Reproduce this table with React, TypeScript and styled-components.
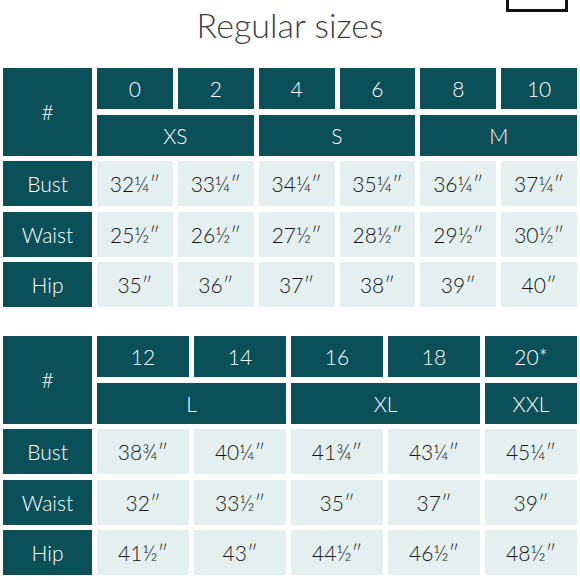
import React from "react";
import styled, { createGlobalStyle } from "styled-components";

const GlobalStyle = createGlobalStyle`
  html, body {
    margin: 0;
    padding: 0;
    background: #ffffff;
  }
  body {
    width: 580px;
    font-family: "Lato", "Noto Sans", "DejaVu Sans", sans-serif;
  }
`;

const TEAL = "#0b4f59";
const LIGHT = "#e4efef";

const Page = styled.div`
  display: flex;
  flex-direction: column;
  padding: 0 3px;
  width: 574px;
`;

const Header = styled.header`
  display: grid;
  grid-template-columns: 1fr auto 1fr;
  height: 68px;
  align-items: start;
`;

const Title = styled.h1`
  grid-column: 2;
  margin: 0;
  padding-top: 5px;
  font-family: "Lato", "Noto Sans", sans-serif;
  font-weight: 300;
  font-size: 34px;
  line-height: 40px;
  color: #404040;
`;

const TopBox = styled.div`
  grid-column: 3;
  justify-self: end;
  margin-right: 9px;
  width: 62px;
  height: 12px;
  box-sizing: border-box;
  border: 3px solid #111;
  border-top: none;
`;

const Table = styled.div<{ $cols: number; $spaced?: boolean }>`
  display: grid;
  grid-template-columns: 89px repeat(${(p) => p.$cols}, 1fr);
  grid-template-rows: 41px 41px 45px 45px 45px;
  column-gap: 5px;
  row-gap: 5.5px;
  margin-top: ${(p) => (p.$spaced ? "29px" : "0")};
`;

const Cell = styled.div<{ $span?: number; $rows?: number }>`
  display: flex;
  align-items: center;
  justify-content: center;
  grid-column: span ${(p) => p.$span ?? 1};
  grid-row: span ${(p) => p.$rows ?? 1};
  font-size: 21px;
  font-weight: 300;
  white-space: nowrap;
`;

const HeadCell = styled(Cell)`
  background: ${TEAL};
  color: #ffffff;
`;

const DataCell = styled(Cell)`
  background: ${LIGHT};
  color: #141414;
`;

type TableData = {
  sizes: string[];
  letters: { label: string; span: number }[];
  rows: { label: string; values: string[] }[];
};

const Q = "\u2033";

const tables: TableData[] = [
  {
    sizes: ["0", "2", "4", "6", "8", "10"],
    letters: [
      { label: "XS", span: 2 },
      { label: "S", span: 2 },
      { label: "M", span: 2 },
    ],
    rows: [
      { label: "Bust", values: ["32¼", "33¼", "34¼", "35¼", "36¼", "37¼"] },
      { label: "Waist", values: ["25½", "26½", "27½", "28½", "29½", "30½"] },
      { label: "Hip", values: ["35", "36", "37", "38", "39", "40"] },
    ],
  },
  {
    sizes: ["12", "14", "16", "18", "20*"],
    letters: [
      { label: "L", span: 2 },
      { label: "XL", span: 2 },
      { label: "XXL", span: 1 },
    ],
    rows: [
      { label: "Bust", values: ["38¾", "40¼", "41¾", "43¼", "45¼"] },
      { label: "Waist", values: ["32", "33½", "35", "37", "39"] },
      { label: "Hip", values: ["41½", "43", "44½", "46½", "48½"] },
    ],
  },
];

function SizeTable({ data, spaced }: { data: TableData; spaced?: boolean }) {
  return (
    <Table $cols={data.sizes.length} $spaced={spaced}>
      <HeadCell $rows={2}>#</HeadCell>
      {data.sizes.map((s) => (
        <HeadCell key={s}>{s}</HeadCell>
      ))}
      {data.letters.map((l) => (
        <HeadCell key={l.label} $span={l.span}>
          {l.label}
        </HeadCell>
      ))}
      {data.rows.map((r) => (
        <React.Fragment key={r.label}>
          <HeadCell>{r.label}</HeadCell>
          {r.values.map((v, i) => (
            <DataCell key={i}>
              {v}
              {Q}
            </DataCell>
          ))}
        </React.Fragment>
      ))}
    </Table>
  );
}

export default function App() {
  return (
    <>
      <GlobalStyle />
      <Page>
        <Header>
          <Title>Regular sizes</Title>
          <TopBox />
        </Header>
        <SizeTable data={tables[0]} />
        <SizeTable data={tables[1]} spaced />
      </Page>
    </>
  );
}
